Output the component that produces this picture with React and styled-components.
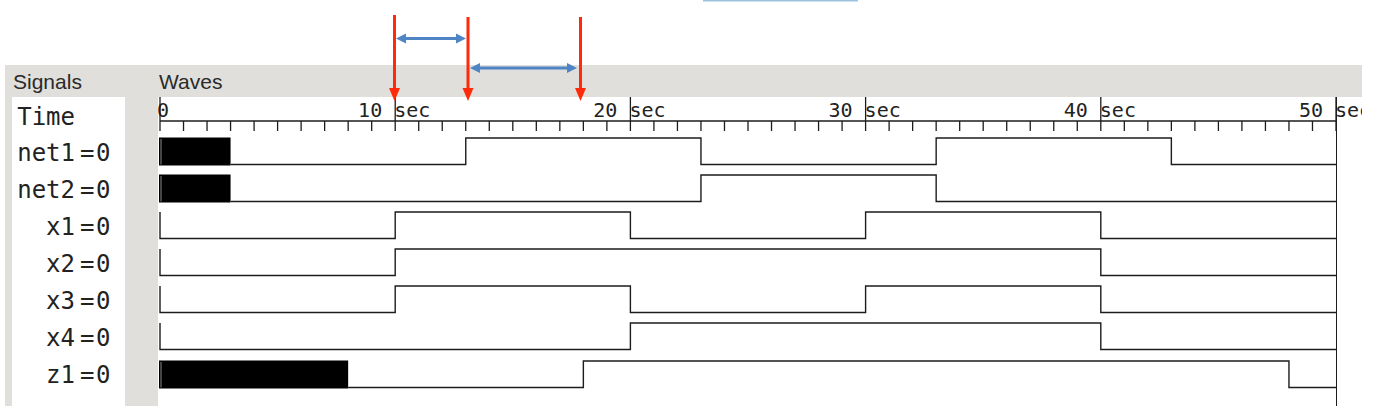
import React from 'react'
import styled, { createGlobalStyle } from 'styled-components'

// Timing diagram geometry
const SCALE = 23.52;
const X0 = 2;
const END = 50;
const HIGH = 4;
const LOW = 30.5;
const ROW_H = 37.1;
const WAVE_W = 1204;
const tx = t => X0 + t * SCALE;

const signals = [
    { name: 'net1', block: 3, edges: [13, 23, 33, 43] },
    { name: 'net2', block: 3, edges: [23, 33] },
    { name: 'x1', lead: true, edges: [10, 20, 30, 40] },
    { name: 'x2', lead: true, edges: [10, 40] },
    { name: 'x3', lead: true, edges: [10, 20, 30, 40] },
    { name: 'x4', lead: true, edges: [20, 40] },
    { name: 'z1', block: 8, edges: [18, 48] },
];

const GlobalStyle = createGlobalStyle`
    html, body {
        margin: 0;
        padding: 0;
        background: #fff;
    }
    body {
        font-family: "Liberation Sans", Arial, sans-serif;
    }
    * {
        box-sizing: border-box;
    }
`;

// Styled components
const Page = styled.div`
    position: relative;
    height: 406px;
    overflow: hidden;
    background: #fff;
`;
const AnnotationSpace = styled.div`
    height: 65px;
`;
const Overlay = styled.svg`
    position: absolute;
    top: 0;
    left: 0;
    pointer-events: none;
    z-index: 2;
`;
const Panel = styled.div`
    margin-left: 5px;
    width: 1357px;
    height: 341px;
    background: #e0dfdb;
    display: flex;
    flex-direction: column;
`;
const Header = styled.div`
    height: 32px;
    display: flex;
    align-items: center;
`;
const HeaderCell = styled.div`
    width: ${props => props.width ? props.width + 'px' : 'auto'};
    padding-left: ${props => props.pad}px;
    padding-top: 2px;
    font-size: 21px;
    color: #2a2a2a;
`;
const Body = styled.div`
    flex: 1;
    display: grid;
    grid-template-columns: 113px 1fr;
    column-gap: 33px;
    padding-left: 7px;
    min-height: 0;
`;
const SignalList = styled.div`
    background: #fff;
    display: flex;
    flex-direction: column;
    font-family: "DejaVu Sans Mono", "Liberation Mono", monospace;
    font-size: 24px;
    color: #222;
`;
const SignalRow = styled.div`
    height: ${props => props.h}px;
    display: flex;
    align-items: center;
    flex-shrink: 0;
    padding-top: ${props => props.shift || 0}px;
`;
const SignalName = styled.span`
    width: 63px;
    text-align: right;
    white-space: pre;
`;
const SignalValue = styled.span`
    margin-left: 5px;
    letter-spacing: 1.5px;
`;
const WaveArea = styled.div`
    position: relative;
    background: #fff;
    overflow: hidden;
    display: flex;
    flex-direction: column;
`;
const EndMarker = styled.div`
    position: absolute;
    top: 0;
    bottom: 0;
    left: ${props => props.x - 0.5}px;
    width: 1.3px;
    background: #1c1c1c;
`;
const Ruler = styled.svg`
    display: block;
    flex-shrink: 0;
    overflow: visible;
`;
const WaveRow = styled.svg`
    display: block;
    flex-shrink: 0;
`;

function wavePath(sig) {
    let d;
    if (sig.lead) {
        d = `M${tx(0)},${HIGH} V${LOW}`;
    } else {
        d = `M${tx(sig.block)},${LOW}`;
    }
    let level = LOW;
    sig.edges.forEach(t => {
        level = level === LOW ? HIGH : LOW;
        d += ` H${tx(t)} V${level}`;
    });
    d += ` H${tx(END)}`;
    return d;
}

function TimeRuler() {
    const ticks = [];
    for (let t = 0; t <= END; t++) {
        const major = t % 10 === 0;
        ticks.push(
            <line key={t} x1={tx(t)} x2={tx(t)} y1={major ? 0 : 24} y2={34}
                stroke="#1c1c1c" strokeWidth="1.3" />
        );
    }
    const labels = [];
    for (let t = 10; t <= END; t += 10) {
        labels.push(
            <text key={'n' + t} x={tx(t) - 13} y={20} textAnchor="end">{t}</text>,
            <text key={'s' + t} x={tx(t) - 1} y={20}>sec</text>
        );
    }
    return (
        <Ruler width={WAVE_W} height={37}>
            <g fontFamily='"DejaVu Sans Mono", "Liberation Mono", monospace' fontSize="20" fill="#222">
                <text x={-1} y={20}>0</text>
                {labels}
            </g>
            <line x1={tx(0)} x2={tx(END)} y1={24} y2={24} stroke="#1c1c1c" strokeWidth="1.3" />
            {ticks}
        </Ruler>
    );
}

function Wave({ sig }) {
    return (
        <WaveRow width={WAVE_W} height={ROW_H}>
            {sig.block ?
                <g>
                    <rect x={tx(0) - 1} y={HIGH - 0.5} width={tx(sig.block) - tx(0) + 1} height={LOW - HIGH + 1.5} fill="#000" />
                    <line x1={tx(0) + 1} x2={tx(0) + 1} y1={HIGH + 1} y2={LOW} stroke="#8a8a8a" strokeWidth="1" />
                </g>
            : null}
            <path d={wavePath(sig)} fill="none" stroke="#1c1c1c" strokeWidth="1.4" />
        </WaveRow>
    );
}

function Annotations() {
    const red = '#ff2a0a';
    const blue = '#4f85c5';
    const redArrow = (x, top) => (
        <g key={x}>
            <rect x={x - 1.5} y={top} width={3} height={90 - top} fill={red} />
            <polygon points={`${x - 5.5},88 ${x + 5.5},88 ${x},101`} fill={red} />
        </g>
    );
    const blueArrow = (x1, x2, y) => (
        <g key={x1}>
            <rect x={x1 + 8} y={y - 1.5} width={x2 - x1 - 16} height={3} fill={blue} />
            <polygon points={`${x1},${y} ${x1 + 10},${y - 5} ${x1 + 10},${y + 5}`} fill={blue} />
            <polygon points={`${x2},${y} ${x2 - 10},${y - 5} ${x2 - 10},${y + 5}`} fill={blue} />
        </g>
    );
    return (
        <Overlay width={1381} height={110}>
            <rect x={703} y={0} width={155} height={1.5} fill="#9cc3e0" />
            {blueArrow(396, 466, 38.5)}
            {blueArrow(470, 577, 68)}
            {redArrow(394.5, 15)}
            {redArrow(468, 17)}
            {redArrow(580.5, 17)}
        </Overlay>
    );
}

export default function App() {
    return (
        <Page>
            <GlobalStyle />
            <Annotations />
            <AnnotationSpace />
            <Panel>
                <Header>
                    <HeaderCell width={153} pad={8}>Signals</HeaderCell>
                    <HeaderCell pad={1}>Waves</HeaderCell>
                </Header>
                <Body>
                    <SignalList>
                        <SignalRow h={37} shift={3}>
                            <SignalName>Time</SignalName>
                        </SignalRow>
                        {signals.map(sig => (
                            <SignalRow key={sig.name} h={ROW_H}>
                                <SignalName>{sig.name}</SignalName>
                                <SignalValue>=0</SignalValue>
                            </SignalRow>
                        ))}
                    </SignalList>
                    <WaveArea>
                        <TimeRuler />
                        {signals.map(sig => <Wave key={sig.name} sig={sig} />)}
                        <EndMarker x={tx(END)} />
                    </WaveArea>
                </Body>
            </Panel>
        </Page>
    );
}
